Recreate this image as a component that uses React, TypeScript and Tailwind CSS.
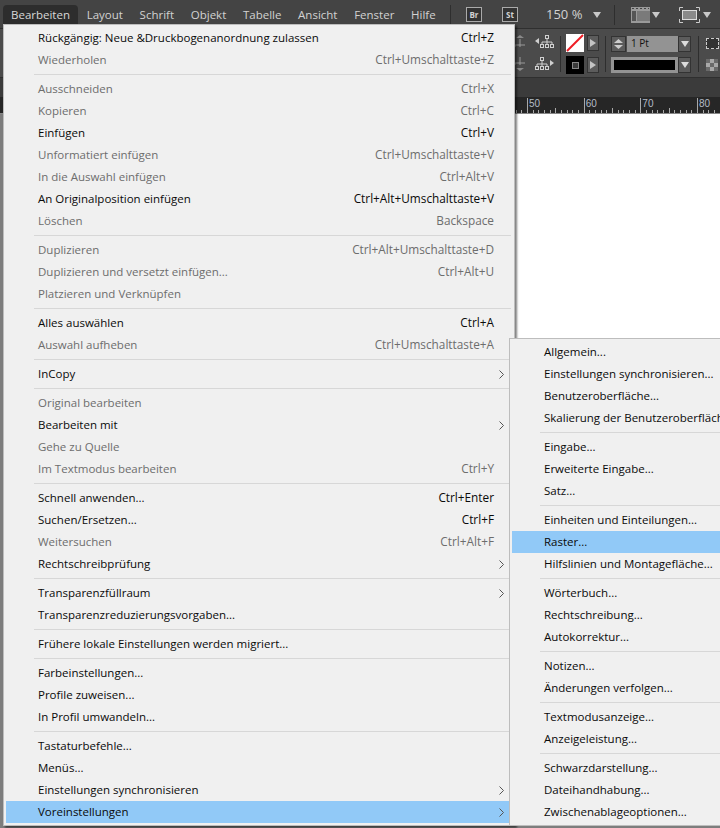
type Item = { label?: string; keys?: string; off?: boolean; arrow?: boolean; active?: boolean; sep?: boolean };

const sep: Item = { sep: true };

const mainItems: Item[] = [
  { label: "Rückgängig: Neue &Druckbogenanordnung zulassen", keys: "Ctrl+Z" },
  { label: "Wiederholen", keys: "Ctrl+Umschalttaste+Z", off: true },
  sep,
  { label: "Ausschneiden", keys: "Ctrl+X", off: true },
  { label: "Kopieren", keys: "Ctrl+C", off: true },
  { label: "Einfügen", keys: "Ctrl+V" },
  { label: "Unformatiert einfügen", keys: "Ctrl+Umschalttaste+V", off: true },
  { label: "In die Auswahl einfügen", keys: "Ctrl+Alt+V", off: true },
  { label: "An Originalposition einfügen", keys: "Ctrl+Alt+Umschalttaste+V" },
  { label: "Löschen", keys: "Backspace", off: true },
  sep,
  { label: "Duplizieren", keys: "Ctrl+Alt+Umschalttaste+D", off: true },
  { label: "Duplizieren und versetzt einfügen...", keys: "Ctrl+Alt+U", off: true },
  { label: "Platzieren und Verknüpfen", off: true },
  sep,
  { label: "Alles auswählen", keys: "Ctrl+A" },
  { label: "Auswahl aufheben", keys: "Ctrl+Umschalttaste+A", off: true },
  sep,
  { label: "InCopy", arrow: true },
  sep,
  { label: "Original bearbeiten", off: true },
  { label: "Bearbeiten mit", arrow: true },
  { label: "Gehe zu Quelle", off: true },
  { label: "Im Textmodus bearbeiten", keys: "Ctrl+Y", off: true },
  sep,
  { label: "Schnell anwenden...", keys: "Ctrl+Enter" },
  { label: "Suchen/Ersetzen...", keys: "Ctrl+F" },
  { label: "Weitersuchen", keys: "Ctrl+Alt+F", off: true },
  { label: "Rechtschreibprüfung", arrow: true },
  sep,
  { label: "Transparenzfüllraum", arrow: true },
  { label: "Transparenzreduzierungsvorgaben..." },
  sep,
  { label: "Frühere lokale Einstellungen werden migriert..." },
  sep,
  { label: "Farbeinstellungen..." },
  { label: "Profile zuweisen..." },
  { label: "In Profil umwandeln..." },
  sep,
  { label: "Tastaturbefehle..." },
  { label: "Menüs..." },
  { label: "Einstellungen synchronisieren", arrow: true },
  { label: "Voreinstellungen", arrow: true, active: true },
];

const subItems: Item[] = [
  { label: "Allgemein..." },
  { label: "Einstellungen synchronisieren..." },
  { label: "Benutzeroberfläche..." },
  { label: "Skalierung der Benutzeroberfläche..." },
  sep,
  { label: "Eingabe..." },
  { label: "Erweiterte Eingabe..." },
  { label: "Satz..." },
  sep,
  { label: "Einheiten und Einteilungen..." },
  { label: "Raster...", active: true },
  { label: "Hilfslinien und Montagefläche..." },
  sep,
  { label: "Wörterbuch..." },
  { label: "Rechtschreibung..." },
  { label: "Autokorrektur..." },
  sep,
  { label: "Notizen..." },
  { label: "Änderungen verfolgen..." },
  sep,
  { label: "Textmodusanzeige..." },
  { label: "Anzeigeleistung..." },
  sep,
  { label: "Schwarzdarstellung..." },
  { label: "Dateihandhabung..." },
  { label: "Zwischenablageoptionen..." },
];

const topMenus = ["Layout", "Schrift", "Objekt", "Tabelle", "Ansicht", "Fenster", "Hilfe"];

function MenuRows({ items }: { items: Item[] }) {
  return (
    <>
      {items.map((item, i) =>
        item.sep ? (
          <div key={i} className="flex h-[7px] items-center pl-[28px] pr-[3px]">
            <div className="h-px w-full bg-[#d7d7d7]" />
          </div>
        ) : (
          <div
            key={i}
            className={`flex h-[22px] items-center whitespace-nowrap ${item.active ? "bg-[#91c9f7]" : ""} ${item.off ? "text-[#6d6d6d]" : "text-[#0a0a0a]"}`}
          >
            <span className="flex-1 pl-[32px]">{item.label}</span>
            {item.keys && <span className="pr-5 text-[11.8px]">{item.keys}</span>}
            {item.arrow && (
              <svg width="5" height="9" viewBox="0 0 5 9" className="mr-[10px]">
                <path d="M0.5 0.5 L4.5 4.5 L0.5 8.5" fill="none" stroke="#555" strokeWidth="1" />
              </svg>
            )}
          </div>
        ),
      )}
    </>
  );
}

function Caret({ color = "#c8c8c8" }: { color?: string }) {
  return (
    <svg width="8" height="6" viewBox="0 0 8 6">
      <path d="M0 0 H8 L4 6 Z" fill={color} />
    </svg>
  );
}

function Tree({ dir }: { dir: "left" | "right" }) {
  const tree = dir === "left" ? "translate(5 0)" : "translate(0 0)";
  return (
    <svg width="19" height="14" viewBox="0 0 19 14">
      <g transform={tree} fill="none" stroke="#d0d0d0">
        <rect x="5.5" y="0.5" width="3" height="3" />
        <path d="M7 4 V7 M2 9 V7 H12 V9 M7 7 V9" />
        <rect x="0.5" y="9.5" width="3" height="3" />
        <rect x="5.5" y="9.5" width="3" height="3" />
        <rect x="10.5" y="9.5" width="3" height="3" />
      </g>
      {dir === "left" ? <path d="M0 6 L4 3 V9 Z" fill="#d0d0d0" /> : <path d="M19 6 L15 3 V9 Z" fill="#d0d0d0" />}
    </svg>
  );
}

function Divider() {
  return <div className="h-[36px] w-px bg-[#2e2e2e]" />;
}

function Ruler() {
  const step = 56.67;
  const ticks = Array.from({ length: 37 }, (_, i) => 12 - 2 * 5.667 + i * 5.667);
  return (
    <svg width="205" height="16" viewBox="0 0 205 16" className="ml-[515px] block">
      {ticks.map((x, i) => {
        const major = (i - 2) % 10 === 0;
        const mid = (i - 2) % 5 === 0;
        const h = major ? 15 : mid ? 5 : 3;
        return <rect key={i} x={Math.round(x)} y={16 - h} width="1" height={h} fill="#a8a8a8" />;
      })}
      {["50", "60", "70", "80"].map((n, i) => (
        <text key={n} x={14 + i * step} y="10" fontSize="10" fill="#b4bcc6" fontFamily="Liberation Sans, sans-serif">
          {n}
        </text>
      ))}
    </svg>
  );
}

function RightButton() {
  return (
    <div className="flex h-[16px] w-[12px] items-center justify-center border border-[#333] bg-[#5c5c5c]">
      <svg width="6" height="8" viewBox="0 0 6 8">
        <path d="M0 0 L6 4 L0 8 Z" fill="#c4c4c4" />
      </svg>
    </div>
  );
}

export default function App() {
  return (
    <div className="relative h-[828px] w-[720px] overflow-hidden bg-[#7d7d7d] text-[11.5px] font-['Open_Sans','Liberation_Sans',sans-serif]">
      {/* menu bar */}
      <div className="flex h-[28px] items-center bg-[#444444] pt-[1px] text-[#d2d2d2]">
        <div className="flex w-[450px] shrink-0 items-center gap-[16.7px] pl-[3px]">
          <span className="-mr-[8px] flex h-[19px] w-[75px] items-center rounded-t-sm bg-[#2d2d2d] pl-[8px] text-[#d8d8d8]">Bearbeiten</span>
          {topMenus.map((m) => (
            <span key={m}>{m}</span>
          ))}
        </div>
        <div className="h-[20px] w-px bg-[#2e2e2e]" />
        <span className="ml-[15px] flex h-[15px] w-[16px] items-center justify-center border border-[#aaa] bg-[#333] text-[8px] font-bold">Br</span>
        <span className="ml-[20px] flex h-[15px] w-[16px] items-center justify-center border border-[#aaa] bg-[#333] text-[8px] font-bold">St</span>
        <span className="ml-[28px] w-[47px] text-[13px]">150 %</span>
        <Caret />
        <div className="ml-[13px] h-[20px] w-px bg-[#2e2e2e]" />
        <svg width="19" height="16" viewBox="0 0 19 16" className="ml-[16px]">
          <rect x="0" y="0" width="19" height="16" fill="#9a9a9a" />
          <path d="M1 1.5 H18" stroke="#444" strokeDasharray="2 2" />
          <rect x="6" y="4" width="13" height="10" fill="#7a7a7a" />
          <rect x="1" y="4" width="4" height="10" fill="#555" />
        </svg>
        <span className="ml-[2px]"><Caret /></span>
        <svg width="21" height="16" viewBox="0 0 21 16" className="ml-[19px]">
          <path d="M0.5 4 V0.5 H4 M17 0.5 H20.5 V4 M20.5 12 V15.5 H17 M4 15.5 H0.5 V12" fill="none" stroke="#ccc" />
          <rect x="3.5" y="3.5" width="14" height="9" fill="#8a8a8a" stroke="#ddd" />
        </svg>
        <span className="ml-[3px]"><Caret /></span>
      </div>

      {/* control panel */}
      <div className="flex h-[50px] items-center border-y border-[#2f2f2f] bg-[#4b4b4b] pl-[515px] pt-[2px]">
        <div className="mb-[2px] flex w-[20px] flex-col gap-[8px] overflow-hidden">
          <svg width="10" height="14" viewBox="0 0 10 14">
            <path d="M5 0 L1 3 H9 Z" fill="#8a8a8a" />
            <path d="M5 4 V10 M0 10 H10 M0 10 V12 M5 10 V12" fill="none" stroke="#9a9a9a" />
          </svg>
          <svg width="10" height="14" viewBox="0 0 10 14">
            <path d="M5 0 V6 M0 6 H10 M0 6 V8 M5 6 V8" fill="none" stroke="#9a9a9a" />
            <path d="M5 14 L1 11 H9 Z" fill="#8a8a8a" />
          </svg>
        </div>
        <div className="mb-[2px] flex w-[25px] flex-col gap-[8px]">
          <Tree dir="left" />
          <Tree dir="right" />
        </div>
        <Divider />
        <div className="ml-[5px] flex flex-col gap-[4px]">
          <svg width="18" height="18" viewBox="0 0 18 18">
            <rect x="0" y="0" width="18" height="18" fill="#fff" />
            <path d="M1 17 L17 1" stroke="#ef1c24" strokeWidth="2" />
          </svg>
          <div className="flex h-[18px] w-[18px] items-center justify-center bg-black">
            <div className="h-[7px] w-[7px] border border-[#888] bg-[#3a3a3a]" />
          </div>
        </div>
        <div className="ml-[3px] flex flex-col gap-[6px]">
          <RightButton />
          <RightButton />
        </div>
        <div className="ml-[6px]"><Divider /></div>
        <div className="ml-[5px] flex w-[80px] flex-col gap-[5px]">
          <div className="flex h-[16px]">
            <div className="flex w-[15px] flex-col items-center justify-center gap-[2px] border border-[#333] bg-[#5c5c5c]">
              <svg width="9" height="4" viewBox="0 0 9 4"><path d="M0 4 L4.5 0 L9 4 Z" fill="#ccc" /></svg>
              <svg width="9" height="4" viewBox="0 0 9 4"><path d="M0 0 L4.5 4 L9 0 Z" fill="#ccc" /></svg>
            </div>
            <div className="ml-px flex flex-1 items-center bg-[#939393] pl-[4px] text-[10px] text-[#111]">1 Pt</div>
            <div className="flex w-[13px] items-center justify-center border border-[#333] bg-[#5c5c5c]"><Caret color="#ddd" /></div>
          </div>
          <div className="flex h-[16px]">
            <div className="flex-1 border-[3px] border-[#939393] bg-black" />
            <div className="flex w-[13px] items-center justify-center border border-[#333] bg-[#5c5c5c]"><Caret color="#ddd" /></div>
          </div>
        </div>
        <div className="ml-[7px]"><Divider /></div>
        <div className="ml-[7px] flex flex-col gap-[10px]">
          <div className="h-[11px] w-[13px] border border-dashed border-[#ccc] bg-[#333]" />
          <svg width="12" height="12" viewBox="0 0 12 12">
            <rect width="12" height="12" fill="#a8a8a8" />
            <path d="M0 0 H4 V4 H0 Z M8 0 H12 V4 H8 Z M4 4 H8 V8 H4 Z M0 8 H4 V12 H0 Z M8 8 H12 V12 H8 Z" fill="#6a6a6a" />
          </svg>
        </div>
      </div>

      <div className="h-[19px] bg-[#3b3b3b]" />
      <div className="h-[17px] border-b border-[#888] bg-[#262626]">
        <Ruler />
      </div>
      <div className="ml-[400px] h-[712px] bg-white" />

      {/* Bearbeiten menu */}
      <div className="absolute left-[3px] top-[24px] w-[512px] border border-[#bdbdbd] bg-[#f0f0f0] py-[2px] pl-[2px] shadow-[2px_2px_2px_rgba(0,0,0,0.5)]">
        <MenuRows items={mainItems} />
      </div>

      {/* Voreinstellungen submenu */}
      <div className="absolute left-[509px] top-[338px] w-[240px] border border-[#bdbdbd] bg-[#f0f0f0] py-[2px] pl-[2px]">
        <MenuRows items={subItems} />
      </div>
    </div>
  );
}
